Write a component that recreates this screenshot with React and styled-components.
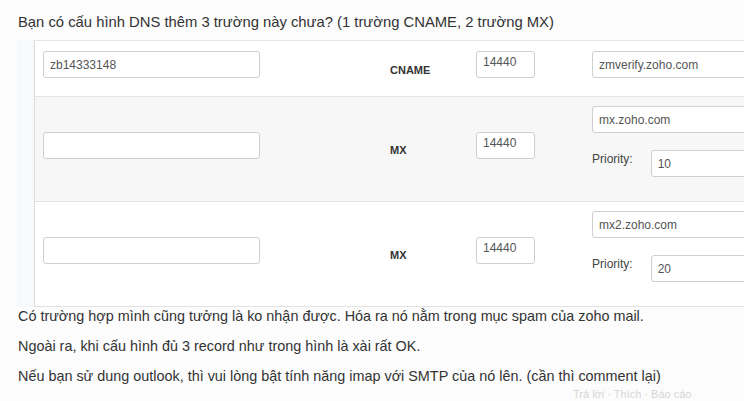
import React from "react";
import styled, { createGlobalStyle } from "styled-components";

const GlobalStyle = createGlobalStyle`
  html, body {
    margin: 0;
    padding: 0;
    background: #fcfcfc;
    overflow: hidden;
  }
  body {
    font-family: "Liberation Sans", Arial, sans-serif;
    color: #333;
  }
`;

const Page = styled.div`
  width: 744px;
  height: 401px;
  overflow: hidden;
  padding-top: 12px;
  box-sizing: border-box;
`;

const Title = styled.p`
  margin: 0 0 0 18px;
  font-size: 14.8px;
  line-height: 20px;
  color: #333;
  white-space: nowrap;
`;

const Frame = styled.div`
  margin: 8px 0 0 17px;
  padding-left: 17px;
  background: #f7f9fc;
  width: 820px;
`;

const Table = styled.div`
  border-left: 1px solid #dcdcdc;
  border-top: 1px solid #e6e6e6;
  background: #fff;
`;

const Row = styled.div`
  display: grid;
  grid-template-columns: 355px 86px 116px 1fr;
  align-items: center;
  height: ${(p) => p.$height}px;
  box-sizing: border-box;
  border-bottom: 1px solid #e3e3e3;
  background: ${(p) => (p.$shaded ? "#f7f7f7" : "#fff")};
`;

const Cell = styled.div`
  padding-left: ${(p) => p.$pad || 0}px;
`;

const Stack = styled.div`
  display: flex;
  flex-direction: column;
  gap: 17px;
  align-self: start;
  padding-top: 9px;
`;

const Input = styled.input`
  display: block;
  box-sizing: border-box;
  width: ${(p) => p.$w}px;
  height: 27px;
  margin: 0 0 ${(p) => (p.$flush ? 0 : 8)}px;
  padding: ${(p) => (p.$top ? "3px 6px 8px" : "4px 6px")};
  border: 1px solid #cfcfcf;
  border-radius: 3px;
  background: #fff;
  font: 12px "Liberation Sans", Arial, sans-serif;
  color: #555;
  outline: none;
`;

const Type = styled.span`
  font: bold 11px "Liberation Sans", Arial, sans-serif;
  color: #333;
`;

const PriorityRow = styled.div`
  display: flex;
  align-items: flex-start;
  gap: 18px;
`;

const PriorityLabel = styled.span`
  font-size: 12px;
  color: #444;
  margin-top: 2px;
`;

const Notes = styled.div`
  margin: -3px 0 0 18px;
`;

const Note = styled.p`
  margin: 0;
  font-size: 14.4px;
  line-height: 20px;
  padding: 2px 0 8px;
  color: #333;
  white-space: nowrap;
`;

const Footer = styled.div`
  margin: -6px 0 0 573px;
  font-size: 11px;
  line-height: 12px;
  color: #d6d6d6;
  white-space: nowrap;
`;

const records = [
  { host: "zb14333148", type: "CNAME", ttl: "14440", target: "zmverify.zoho.com", height: 56 },
  { host: "", type: "MX", ttl: "14440", target: "mx.zoho.com", priority: "10", height: 105, shaded: true },
  { host: "", type: "MX", ttl: "14440", target: "mx2.zoho.com", priority: "20", height: 105 },
];

const RecordRow = ({ host, type, ttl, target, priority, height, shaded }) => (
  <Row $height={height} $shaded={shaded}>
    <Cell $pad={8}>
      <Input $w={217} defaultValue={host} readOnly />
    </Cell>
    <Cell>
      <Type>{type}</Type>
    </Cell>
    <Cell>
      <Input $w={59} $top defaultValue={ttl} readOnly />
    </Cell>
    {priority ? (
      <Stack>
        <Input $w={200} $flush defaultValue={target} readOnly />
        <PriorityRow>
          <PriorityLabel>Priority:</PriorityLabel>
          <Input $w={140} defaultValue={priority} readOnly />
        </PriorityRow>
      </Stack>
    ) : (
      <Cell>
        <Input $w={200} defaultValue={target} readOnly />
      </Cell>
    )}
  </Row>
);

export default function App() {
  return (
    <Page>
      <GlobalStyle />
      <Title>Bạn có cấu hình DNS thêm 3 trường này chưa? (1 trường CNAME, 2 trường MX)</Title>
      <Frame>
        <Table>
          {records.map((r, i) => (
            <RecordRow key={i} {...r} />
          ))}
        </Table>
      </Frame>
      <Notes>
        <Note>Có trường hợp mình cũng tưởng là ko nhận được. Hóa ra nó nằm trong mục spam của zoho mail.</Note>
        <Note>Ngoài ra, khi cấu hình đủ 3 record như trong hình là xài rất OK.</Note>
        <Note>Nếu bạn sử dung outlook, thì vui lòng bật tính năng imap với SMTP của nó lên. (cần thì comment lại)</Note>
      </Notes>
      <Footer>Trả lời · Thích · Báo cáo</Footer>
    </Page>
  );
}
